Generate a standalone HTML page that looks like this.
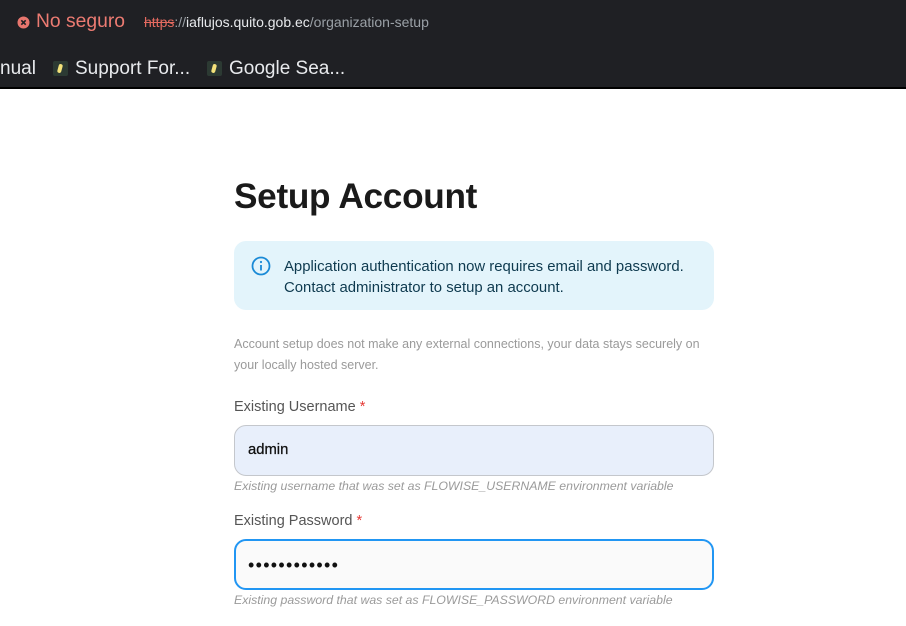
<!DOCTYPE html>
<html><head><meta charset="utf-8"><style>
*{margin:0;padding:0;box-sizing:border-box}
body{width:906px;height:626px;overflow:hidden;background:#fff;font-family:"Liberation Sans",sans-serif;position:relative}
.bar{position:absolute;left:0;top:0;width:906px;height:88px;background:#1f2024}
.line{position:absolute;left:0;top:87px;width:906px;height:2px;background:#000}
.abs{position:absolute;white-space:nowrap}
.fav{position:absolute;width:15px;height:15px;background:#2c3a33;border-radius:2px}
.fav:after{content:"";position:absolute;left:5px;top:3px;width:4px;height:9px;background:#f3e27a;border-radius:3px;transform:rotate(15deg)}
.input{position:absolute;left:234px;width:480px;height:51px;border-radius:12px}
</style></head><body>
<div class="bar"></div><div class="line"></div>
<svg class="abs" style="left:17px;top:16px" width="13" height="13"><circle cx="6.5" cy="6.5" r="6" fill="#e8766e"/><path d="M4.3 4.3l4.4 4.4M8.7 4.3l-4.4 4.4" stroke="#1f2024" stroke-width="1.6"/></svg>
<div class="abs" style="left:36px;top:11px;font-size:19.3px;color:#ec7b72">No seguro</div>
<div class="abs" style="left:144px;top:14px;font-size:14px;color:#9aa0a6"><span style="color:#e46a60;text-decoration:line-through">https</span>://<span style="color:#e8eaed">iaflujos.quito.gob.ec</span>/organization-setup</div>
<div class="abs" style="left:0;top:58px;font-size:19px;color:#e8eaed">nual</div>
<div class="fav" style="left:53px;top:61px"></div>
<div class="abs" style="left:75px;top:58px;font-size:19px;color:#e8eaed">Support For...</div>
<div class="fav" style="left:207px;top:61px"></div>
<div class="abs" style="left:229px;top:58px;font-size:19px;color:#e8eaed">Google Sea...</div>

<div class="abs" style="left:234px;top:177px;font-size:35.2px;font-weight:bold;color:#1a1a1a;letter-spacing:-0.3px">Setup Account</div>
<div class="abs" style="left:234px;top:241px;width:480px;height:69px;background:#e3f4fb;border-radius:12px"></div>
<svg class="abs" style="left:251px;top:256px" width="20" height="20"><circle cx="10" cy="10" r="8.5" fill="none" stroke="#1a8ad6" stroke-width="1.8"/><path d="M10 9v5.5" stroke="#1a8ad6" stroke-width="1.8"/><circle cx="10" cy="6" r="1.1" fill="#1a8ad6"/></svg>
<div class="abs" style="left:284px;top:257px;font-size:14.9px;line-height:21px;color:#0e3a4f">Application authentication now requires email and password.<br>Contact administrator to setup an account.</div>
<div class="abs" style="left:234px;top:334px;font-size:12.5px;line-height:21px;color:#9a9a9a">Account setup does not make any external connections, your data stays securely on<br>your locally hosted server.</div>

<div class="abs" style="left:234px;top:399px;font-size:14.5px;color:#555">Existing Username <span style="color:#e53935">*</span></div>
<div class="input" style="top:425px;background:#e8effb;border:1px solid #c4c7cc"></div>
<div class="abs" style="left:248px;top:442px;font-size:14.8px;color:#111;-webkit-text-stroke:0.3px #111">admin</div>
<div class="abs" style="left:234px;top:479px;font-size:12.3px;font-style:italic;color:#9a9a9a">Existing username that was set as FLOWISE_USERNAME environment variable</div>

<div class="abs" style="left:234px;top:513px;font-size:14.5px;color:#555">Existing Password <span style="color:#e53935">*</span></div>
<div class="input" style="top:539px;background:#fafafa;border:2px solid #2196f3"></div>
<div class="abs" style="left:248px;top:555px;font-size:18px;letter-spacing:1.3px;color:#111">••••••••••••</div>
<div class="abs" style="left:234px;top:593px;font-size:12.3px;font-style:italic;color:#9a9a9a">Existing password that was set as FLOWISE_PASSWORD environment variable</div>
</body></html>
